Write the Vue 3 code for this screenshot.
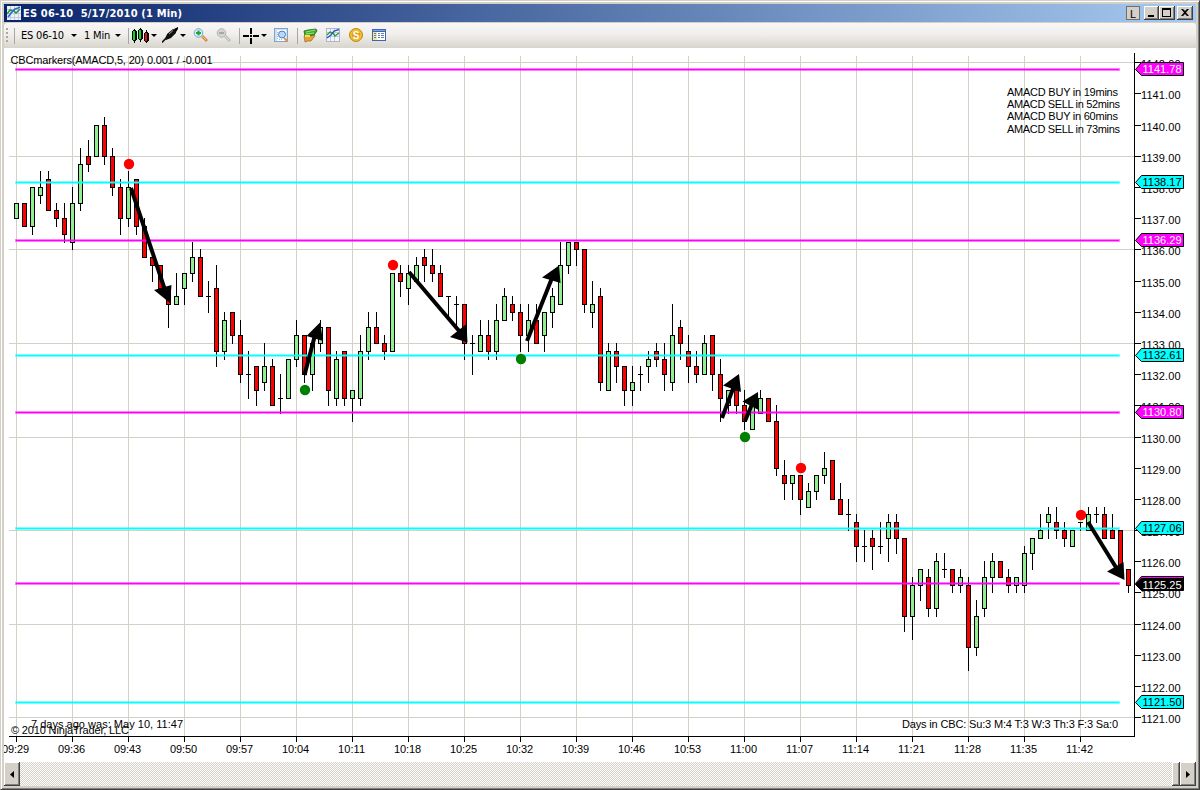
<script setup>
import { computed } from 'vue'

// [open side, high, low, close] counted in quarter points below 1142.00
// kind: g = up, r = down, d = unchanged
const raw = `g18,20,18,20 r18,21,18,21 g16,21,16,22 g16,17,14,18 r15,19,14,19 r19,20,18,21 r20,22,18,23 g18,23,16,24
g13,18,11,19 r12,13,10,14 g8,12,8,12 r8,12,7,13 r12,16,11,17 r16,20,15,22 g16,20,14,21 r15,21,15,22
r21,25,20,25 r25,26,25,28 r26,29,26,29 r29,31,29,34 g30,31,27,31 g27,29,27,31 g25,27,23,28 r25,30,24,30
d30,30,28,32 r29,37,26,39 g33,37,32,38 r32,35,32,36 r35,40,33,41 d40,40,37,43 r39,42,39,44 g39,41,36,42
r39,44,38,44 d43,43,40,45 g38,43,38,43 g35,38,33,39 r35,40,35,41 g36,40,36,42 g34,36,33,37 r34,42,34,44
g38,43,37,44 r37,43,37,44 g42,43,42,46 g37,43,35,44 g34,37,32,38 r34,36,32,36 r36,37,35,38 g27,37,27,37
r27,28,26,30 g27,29,26,31 g26,28,25,28 r25,26,24,28 r26,27,24,28 r27,30,26,30 d30,30,30,33 d31,31,30,34
r31,36,31,38 d36,36,35,40 g35,37,33,37 r35,37,33,38 g33,37,31,38 g30,33,29,33 r31,32,30,33 r32,35,31,37
g33,35,31,37 r33,36,31,36 g32,35,32,37 g30,32,29,34 g26,31,23,31 g23,26,23,27 r23,24,23,26 r24,31,24,32
g31,32,28,34 r30,41,29,42 g37,42,36,42 r37,39,36,41 r39,42,39,44 g41,42,39,44 d40,40,39,42 g38,39,37,41
r37,38,36,39 r38,40,36,42 g35,41,31,42 r34,36,33,38 r37,39,35,41 r39,40,37,41 g36,40,35,40 r35,40,35,42
r40,43,38,46 g42,44,42,45 r42,44,42,45 r44,46,42,47 g44,47,44,47 g43,45,42,45 r43,46,43,46 r46,52,44,53
r53,54,51,56 g53,54,53,56 r53,56,53,58 g55,57,54,57 g53,55,53,56 g52,53,50,54 r51,56,51,56 r56,58,54,58
d58,58,56,60 r59,62,58,64 d62,62,60,64 r61,62,60,65 d62,62,59,63 g59,61,58,64 r59,61,58,63 r61,71,61,73
g67,71,66,74 g65,67,65,69 r66,70,65,71 g64,70,63,71 d65,65,63,66 r65,67,65,68 g66,67,65,68 r67,75,66,78
g71,75,69,76 g66,70,64,71 g64,66,63,68 r64,66,64,66 r66,67,65,68 g66,67,66,68 g63,67,62,68 g61,63,61,65
g60,61,58,61 g58,59,57,61 r59,60,57,61 r60,61,59,62 g60,62,60,62 d59,59,59,60 g58,60,57,60 d58,58,57,59
r58,61,57,61 r60,61,58,61 r60,65,60,65 r65,67,65,68`

const yAt = (tick) => Math.floor(62.8 + 7.796 * tick)

const candles = computed(() =>
  raw.split(/\s+/).map((s, i) => {
    const [top, bottom, high, low] = s.slice(1).split(',').map(Number)
    return { x: 16 + i * 8, kind: s[0], top: yAt(top), bottom: yAt(bottom), high: yAt(high), low: yAt(low) }
  })
)

const times = ['09:29', '09:36', '09:43', '09:50', '09:57', '10:04', '10:11', '10:18', '10:25', '10:32',
  '10:39', '10:46', '10:53', '11:00', '11:07', '11:14', '11:21', '11:28', '11:35', '11:42']

const prices = Array.from({ length: 22 }, (_, i) => ({ y: yAt(i * 4), label: (1142 - i).toFixed(2), grid: i % 3 === 0 }))

const levels = [
  { y: 69, price: '1141.78', type: 'magenta' },
  { y: 182, price: '1138.17', type: 'cyan' },
  { y: 240, price: '1136.29', type: 'magenta' },
  { y: 355, price: '1132.61', type: 'cyan' },
  { y: 412, price: '1130.80', type: 'magenta' },
  { y: 528, price: '1127.06', type: 'cyan' },
  { y: 583, price: '1125.29', type: 'magenta' },
  { y: 702, price: '1121.50', type: 'cyan' }
]

const dots = [
  [129, 164, 'sell'], [305, 390, 'buy'], [393, 265, 'sell'], [521, 359, 'buy'],
  [745, 437, 'buy'], [801, 468, 'sell'], [1081, 515, 'sell']
]

// shaft start, shaft end, head triangle
const arrows = [
  { line: [131, 188, 165, 290], head: '154,290 171.5,285 170,303' },
  { line: [304.5, 375, 315, 335], head: '306.5,336 320,322.5 323,341' },
  { line: [409, 272, 460, 332], head: '450,337 466.5,324 467.5,342.5' },
  { line: [527, 341, 552, 278], head: '542,277.5 559,265.5 560.5,283' },
  { line: [722, 418, 734, 386], head: '723,385.5 739,374 741,392' },
  { line: [745, 421, 753, 402], head: '742.5,401.5 758,392 758.5,410' },
  { line: [1088, 522, 1117, 569], head: '1107,571.5 1123.5,562 1124.5,580' }
]

const notes = [
  { x: 10.5, y: 64, w: 202, text: 'CBCmarkers(AMACD,5, 20) 0.001 / -0.001' },
  { x: 1007, y: 96, w: 111, text: 'AMACD BUY in 19mins' },
  { x: 1007, y: 108, w: 113, text: 'AMACD SELL in 52mins' },
  { x: 1007, y: 120, w: 111, text: 'AMACD BUY in 60mins' },
  { x: 1007, y: 133, w: 113, text: 'AMACD SELL in 73mins' },
  { x: 31, y: 728, w: 152, text: '7 days ago was: May 10, 11:47' },
  { x: 11, y: 734, w: 118, text: '© 2010 NinjaTrader, LLC' },
  { x: 902, y: 728, w: 216, text: 'Days in CBC: Su:3 M:4 T:3 W:3 Th:3 F:3 Sa:0' }
]
</script>

<template>
  <div class="window">
    <header class="titlebar">
      <svg class="app-icon" width="14" height="14" viewBox="0 0 14 14">
        <rect width="14" height="14" fill="#eef0f8" />
        <path d="M0 3.5H14M0 7.5H14M0 11.5H14M3.5 0V14M7.5 0V14M11.5 0V14" stroke="#c3c9de" />
        <path d="M0 8 3 4 7 5 9 7 13 3" fill="none" stroke="#2c9a3a" stroke-width="1.6" />
        <path d="M1 11 5 6 8 3 11 2 13 1" fill="none" stroke="#2a6ad0" stroke-width="1.6" />
      </svg>
      <span class="title">ES 06-10&nbsp; 5/17/2010 (1 Min)</span>
      <div class="controls">
        <span class="link-btn">L</span>
        <svg class="ctl min" width="15" height="14" viewBox="0 0 15 14"><path d="M4 9h6v2H4z" /></svg>
        <svg class="ctl max" width="16" height="14" viewBox="0 0 16 14"><path d="M3 2h9v9H3zM4 4v6h7V4z" fill-rule="evenodd" /></svg>
        <svg class="ctl close" width="16" height="14" viewBox="0 0 16 14"><path d="M4 3h2l2 2 2-2h2L9 6.5 12 10h-2L8 8l-2 2H4l3-3.500z" /></svg>
      </div>
    </header>

    <nav class="toolbar">
      <span class="grip"></span>
      <i class="sep first"></i>
      <span class="label symbol">ES 06-10</span>
      <i class="caret"></i>
      <span class="label interval">1 Min</span>
      <i class="caret"></i>
      <i class="sep second"></i>
      <svg class="candle-icon" width="18" height="15" viewBox="0 0 18 15" shape-rendering="crispEdges">
        <path d="M2 1h1v14H2zM8 0h1v14H8zM14 2h1v13h-1z" />
        <path d="M1 2h3v1h1v9H4v1H1zM7 1h3v1h1v9h-1v1H7zM13 4h3v1h1v8h-1v1h-3z" />
        <path d="M0 3h1v9H0zM6 2h1v9H6zM12 5h1v8h-1z" />
        <path d="M1 3h2v9H1zM7 2h2v9H7z" fill="#0d2" />
        <path d="M13 5h2v8h-2z" fill="#e01010" />
      </svg>
      <i class="caret tight"></i>
      <svg class="pen-icon" width="17" height="17" viewBox="0 0 17 17">
        <path d="M3 12 5 7 11 2 14 3 14 6 9 11 4 13z" fill="#111" />
        <path d="M0 15.500 6 9" stroke="#111" stroke-width="1.600" />
        <path d="M7 7 11 3.500" stroke="#999" />
        <path d="M12 2 16 0 16 2 14 5z" />
      </svg>
      <i class="caret tight"></i>
      <svg class="zoom-icon" width="15" height="15" viewBox="0 0 15 15">
        <path d="m9 8 5 5" stroke="#d98a4b" stroke-width="3" />
        <path d="m9 8 4 4" stroke="#f6c08a" />
        <circle cx="5.500" cy="5" r="4.300" fill="#d9f1f6" stroke="#6aa7d6" />
        <path d="M5.500 2.500v5M3 5h5" stroke="#1ea535" stroke-width="2" />
      </svg>
      <svg class="zoom-icon out" width="15" height="15" viewBox="0 0 15 15">
        <path d="m9 8 5 5" stroke="#bdbdbd" stroke-width="3" />
        <path d="m9 8 4 4" stroke="#dcdcdc" />
        <circle cx="5.500" cy="5" r="4.300" fill="#d4d4d4" stroke="#b5b5b5" />
        <path d="M3 5h5" stroke="#999" stroke-width="1.500" />
      </svg>
      <i class="sep third"></i>
      <svg class="cross-icon" width="17" height="16" viewBox="0 0 17 16" shape-rendering="crispEdges">
        <path d="M0 7h6v2H0zM10 7h6v2h-6zM7 0h2v6H7zM7 10h2v6H7zM7 7h2v2H7z" />
      </svg>
      <i class="caret tight"></i>
      <svg class="find-icon" width="15" height="15" viewBox="0 0 15 15">
        <rect x=".5" y=".5" width="13" height="13" fill="#cfe0f3" stroke="#7ba2d0" />
        <path d="M3 2h9v11H3z" fill="#fff" />
        <path d="M3.500 4v8M5 11.500h4" stroke="#9db8d8" stroke-dasharray="1 1" />
        <path d="m10 10 3.500 3.500" stroke="#df9350" stroke-width="2" />
        <circle cx="8" cy="6.500" r="3.500" fill="#b9d8f2" stroke="#4a7fc0" />
      </svg>
      <i class="sep fourth"></i>
      <svg class="tool" width="15" height="15" viewBox="0 0 15 15">
        <path d="M1 8h7l3-2 1 2-4 5H5l-3 1z" fill="#e9a03a" stroke="#8a5a17" stroke-width=".6" />
        <path d="m1 3 4-1 8-1 1 2-3 4-9 1z" fill="#3fae2b" stroke="#17661a" stroke-width=".8" />
        <path d="m3 4 9-2M3 6l8-1" stroke="#9be07c" />
        <path d="M2 8h5" stroke="#f6e13f" stroke-width="2" />
      </svg>
      <svg class="tool" width="15" height="15" viewBox="0 0 15 15">
        <rect x=".5" y=".5" width="13" height="13" fill="#f4f5fb" stroke="#aeb4cc" />
        <path d="M1 4.500h12M1 8.500h12M4.500 1v12M8.500 1v12" stroke="#c4c9dd" />
        <path d="M1 7 4 4 7 5 9 8 13 5" fill="none" stroke="#2c9a3a" stroke-width="1.400" />
        <path d="M1 10 5 7 8 3 13 1.500" fill="none" stroke="#2a5ac0" stroke-width="1.400" />
      </svg>
      <svg class="tool" width="15" height="15" viewBox="0 0 15 15">
        <circle cx="7" cy="7" r="6.500" fill="#eeb41c" stroke="#c48a10" />
        <circle cx="7" cy="7" r="4.800" fill="#e0a010" stroke="#f8d35a" stroke-width=".7" />
        <text x="7" y="10.500" class="coin">S</text>
      </svg>
      <svg class="tool" width="15" height="15" viewBox="0 0 15 15" shape-rendering="crispEdges">
        <path d="M0 1h14v12H0z" fill="#3f66ad" />
        <path d="M1 4h12v8H1z" fill="#fff" />
        <path d="M1 2h12v1H1z" fill="#7fa5e0" />
        <path d="M1 4h4v8H1z" fill="#f3e4a0" />
        <path d="M6 5h2v1H6zM9 5h3v1H9zM6 7h2v1H6zM9 7h3v1H9zM6 9h2v1H6zM9 9h3v1H9zM2 5h2v1H2zM2 7h2v1H2zM2 9h2v1H2z" fill="#5c7fb8" />
      </svg>
    </nav>

    <svg class="chart" width="1192" height="714" viewBox="4 48 1192 714">
      <g shape-rendering="crispEdges">
        <rect v-for="(t, i) in times" :key="t" :x="16 + i * 56" y="56" width="1" height="680" class="grid" />
        <template v-for="p in prices" :key="p.label">
          <rect v-if="p.grid" x="9" :y="p.y" width="1125" height="1" class="grid" />
          <rect x="1135" :y="p.y" width="6" height="1" />
        </template>
        <rect x="9" y="736" width="1126" height="1" />
        <rect x="1134" y="53" width="1" height="684" />
        <rect v-for="(t, i) in times" :key="t" :x="16 + i * 56" y="737" width="1" height="5" />

        <g v-for="c in candles" :key="c.x">
          <rect :x="c.x" :y="c.high" width="1" :height="c.low - c.high + 1" />
          <rect v-if="c.kind === 'd'" :x="c.x - 2" :y="c.top" width="5" height="1" />
          <template v-else>
            <rect :x="c.x - 2" :y="c.top" width="5" :height="c.bottom - c.top + 1" />
            <rect :x="c.x - 1" :y="c.top + 1" width="3" :height="c.bottom - c.top - 1" :class="c.kind === 'g' ? 'up' : 'down'" />
          </template>
        </g>
      </g>

      <text v-for="(t, i) in times" :key="t" :x="15.5 + i * 56" y="753" class="time" textLength="27">{{ t }}</text>
      <text v-for="p in prices" :key="p.label" x="1141" :y="p.y + 6" textLength="39.500">{{ p.label }}</text>

      <g v-for="l in levels" :key="l.price" :class="l.type">
        <rect x="15" :y="l.y - 1" width="1105" height="3" opacity=".5" />
        <rect x="16" :y="l.y" width="1103" height="1" />
        <path :d="`M1135.500 ${l.y + .5} L1141.500 ${l.y - 6.5} H1183.500 V${l.y + 6.5} H1141.500 Z`" class="tag" />
        <text x="1142.500" :y="l.y + 4" textLength="39" class="tag-text">{{ l.price }}</text>
      </g>
      <path d="M1135.500 584.500 1141.500 578.500H1183.500V590.500H1141.500Z" stroke="#000" />
      <text x="1142.500" y="589" textLength="39" fill="#fff">1125.25</text>

      <circle v-for="[x, y, side] in dots" :key="x" :cx="x" :cy="y" r="5.200" :class="side" />
      <g v-for="a in arrows" :key="a.head">
        <line :x1="a.line[0]" :y1="a.line[1]" :x2="a.line[2]" :y2="a.line[3]" stroke="#000" stroke-width="4" />
        <polygon :points="a.head" />
      </g>

      <text v-for="n in notes" :key="n.text" :x="n.x" :y="n.y" :textLength="n.w">{{ n.text }}</text>
    </svg>

    <footer class="scrollbar">
      <span class="scroll-btn"><svg width="5" height="7" viewBox="0 0 5 7"><path d="M4 0v7L0 3.500z" /></svg></span>
      <span class="track"></span>
      <span class="thumb"></span>
      <span class="scroll-btn"><svg width="5" height="7" viewBox="0 0 5 7"><path d="M0 0v7l4-3.500z" /></svg></span>
    </footer>
  </div>
</template>

<style>
body {
  background: #d4d0c8;
  overflow: hidden;
}
</style>

<style scoped>
.window {
  box-sizing: border-box;
  width: 1200px;
  height: 790px;
  padding: 3px;
  border: 1px solid #d4d0c8;
  border-right-color: #404040;
  border-bottom-color: #404040;
  box-shadow: inset 1px 1px #fff, inset -1px -1px #808080;
  background: #d4d0c8;
  display: flex;
  flex-direction: column;
  overflow: hidden;
  font: 11px "Liberation Sans", Arial, sans-serif;
}

.titlebar {
  flex: none;
  display: flex;
  align-items: center;
  height: 18px;
  padding: 0 3px;
  background: linear-gradient(90deg, #0a246a, #a6caf0);
}

.app-icon {
  flex: none;
}

.title {
  margin-left: 2px;
  color: #fff;
  font: bold 11px "DejaVu Sans Condensed", "DejaVu Sans", sans-serif;
  font-stretch: condensed;
  letter-spacing: 0.18px;
  white-space: nowrap;
}

.controls {
  display: flex;
  margin-left: auto;
}

.link-btn {
  box-sizing: border-box;
  width: 14px;
  height: 14px;
  margin-right: 4px;
  border: 1px solid #707070;
  background: #d4d0c8;
  font-size: 11px;
  line-height: 14px;
  text-align: center;
}

.ctl {
  background: #d4d0c8;
  box-shadow: inset -1px -1px #404040, inset 1px 1px #fff, inset -2px -2px #808080;
}

.close {
  margin-left: 2px;
}

.toolbar {
  flex: none;
  display: flex;
  align-items: center;
  height: 25px;
  margin-top: 1px;
  border-radius: 3px;
  background: linear-gradient(#f8f7f6, #f0efec 45%, #d8d5cd);
}

.grip {
  width: 2px;
  height: 15px;
  margin-left: 2px;
  background: repeating-linear-gradient(#aaa79f 0 2px, transparent 2px 4px);
}

.sep {
  flex: none;
  width: 1px;
  height: 16px;
  background: #a6a6a6;
}

.first {
  margin: 0 6px;
}

.label {
  font: 11px "DejaVu Sans Condensed", "DejaVu Sans", sans-serif;
  font-stretch: condensed;
  white-space: nowrap;
  letter-spacing: -0.2px;
}

.symbol {
  width: 50px;
}

.interval {
  width: 31px;
  margin-left: 7px;
}

.caret {
  flex: none;
  border: 3px solid transparent;
  border-top-color: #000;
  border-bottom: 0;
}

.tight {
  margin-left: 1px;
}

.second {
  margin: 0 3px 0 7px;
}

.pen-icon {
  margin-left: 5px;
}

.zoom-icon {
  margin-left: 7px;
}

.out {
  margin-left: 8px;
}

.third {
  margin: 0 3px 0 8px;
}

.find-icon {
  margin-left: 7px;
}

.fourth {
  margin: 0 5px 0 8px;
}

.tool {
  margin-right: 8px;
}

.toolbar svg {
  flex: none;
}

.coin {
  font: bold 10px "Liberation Sans", Arial, sans-serif;
  fill: #fff;
  text-anchor: middle;
}

.chart {
  flex: none;
  display: block;
  background: #fff;
}

.grid {
  fill: #d4d0c8;
}

.up {
  fill: #90ee90;
}

.down {
  fill: #f00;
}

.time {
  text-anchor: middle;
}

.magenta {
  fill: #f0f;
}

.cyan {
  fill: #0ff;
}

.tag {
  stroke: #000;
}

.magenta .tag-text {
  fill: #fff;
}

.cyan .tag-text {
  fill: #000;
}

.buy {
  fill: #008000;
}

.sell {
  fill: #f00;
}

.scrollbar {
  flex: none;
  display: flex;
  height: 24px;
}

.scroll-btn,
.thumb {
  flex: none;
  display: flex;
  align-items: center;
  justify-content: center;
  width: 16px;
  background: #d4d0c8;
  box-shadow: inset -1px -1px #404040, inset 1px 1px #fff, inset -2px -2px #808080;
}

.thumb {
  width: 8px;
}

.track {
  flex: 1;
  background: repeating-conic-gradient(#d4d0c8 0 25%, #fff 0 50%) 0 0 / 2px 2px;
}
</style>
